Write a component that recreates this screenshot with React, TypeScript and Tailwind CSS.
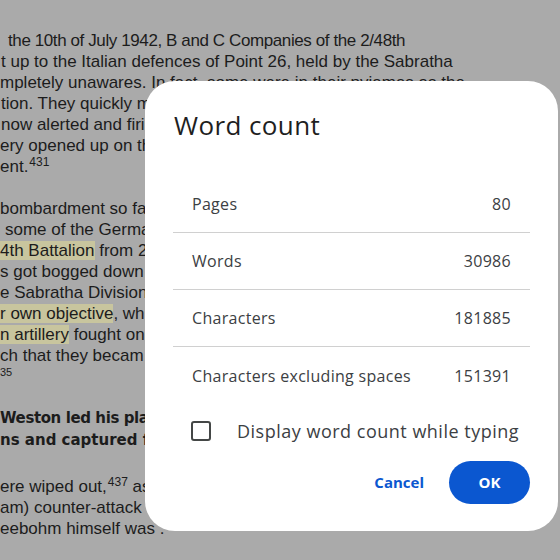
function Line({ children, className = '' }: { children: React.ReactNode; className?: string }) {
  return <div className={`h-[21px] leading-[21px] whitespace-nowrap ${className}`}>{children}</div>
}

function Hl({ children }: { children: React.ReactNode }) {
  return <span className="bg-[#c8c59e]">{children}</span>
}

function Sup({ children }: { children: React.ReactNode }) {
  return <sup className="text-[12px] ml-[1px]">{children}</sup>
}

const stats = [
  { label: 'Pages', value: '80' },
  { label: 'Words', value: '30986' },
  { label: 'Characters', value: '181885' },
  { label: 'Characters excluding spaces', value: '151391' },
]

export default function App() {
  return (
    <div className="relative w-[560px] h-[560px] overflow-hidden bg-[#aaaaaa]">
      <div className="pt-[30px] text-[17px] text-[#1c1c1c] font-['Liberation_Sans',Arial,sans-serif]">
        <Line className="pl-[8px] tracking-[-0.4px]">the 10th of July 1942, B and C Companies of the 2/48th</Line>
        <Line className="pl-[1px]">t up to the Italian defences of Point 26, held by the Sabratha</Line>
        <Line>mpletely unawares. In fact, some were in their pyjamas as the</Line>
        <Line className="pl-[1px]">tion. They quickly moved through the position</Line>
        <Line className="pl-[1px]">now alerted and firing</Line>
        <Line>ery opened up on the</Line>
        <Line>ent.<Sup>431</Sup></Line>
        <Line>&nbsp;</Line>
        <Line>bombardment so far</Line>
        <Line className="pl-[5px]">some of the German</Line>
        <Line><Hl>4th Battalion</Hl> from 2</Line>
        <Line>s got bogged down</Line>
        <Line>e Sabratha Division</Line>
        <Line><Hl>r own objective</Hl>, wh</Line>
        <Line><Hl>n artillery</Hl> fought on</Line>
        <Line>ch that they becam</Line>
        <Line className="text-[11px] -mt-[4px]">35</Line>
        <Line>&nbsp;</Line>
        <Line className="font-['DejaVu_Sans',Verdana,sans-serif] font-bold text-[15px] h-[22px] mt-[4px] tracking-[-0.4px]">Weston led his pla</Line>
        <Line className="font-['DejaVu_Sans',Verdana,sans-serif] font-bold text-[15px] h-[22px]">ns and captured fo</Line>
        <Line>&nbsp;</Line>
        <Line className="mt-[3px]">ere wiped out,<Sup>437</Sup> as</Line>
        <Line>am) counter-attack</Line>
        <Line>eebohm himself was .</Line>
      </div>

      <div className="absolute left-[145px] top-[81px] w-[413px] h-[450px] rounded-[30px] bg-white font-['Open_Sans','Roboto',sans-serif]">
        <div className="pt-[28px] pl-[29px] h-[60px] text-[26px] leading-[32px] tracking-[0.4px] text-[#1f1f1f]">Word count</div>
        <div className="mt-[35px] mx-[28px]">
          {stats.map((s, i) => (
            <div
              key={s.label}
              className={`h-[57px] px-[19px] flex items-center justify-between text-[16px] tracking-[0.3px] text-[#3c4043] ${
                i < stats.length - 1 ? 'border-b border-[#d0d0d0]' : ''
              }`}
            >
              <span>{s.label}</span>
              <span>{s.value}</span>
            </div>
          ))}
        </div>
        <div className="mt-[7px] h-[40px] pl-[46px] flex items-center gap-[26px]">
          <div className="w-[20px] h-[20px] border-2 border-[#444746] rounded-[3px]" />
          <span className="text-[18px] tracking-[0.5px] text-[#3c4043]">Display word count while typing</span>
        </div>
        <div className="mt-[10px] mr-[28px] flex justify-end items-center gap-[25px]">
          <button className="text-[15px] font-bold text-[#0b57d0]">Cancel</button>
          <button className="w-[81px] h-[43px] rounded-full bg-[#0b57d0] text-white text-[15px] font-bold">OK</button>
        </div>
      </div>
    </div>
  )
}
